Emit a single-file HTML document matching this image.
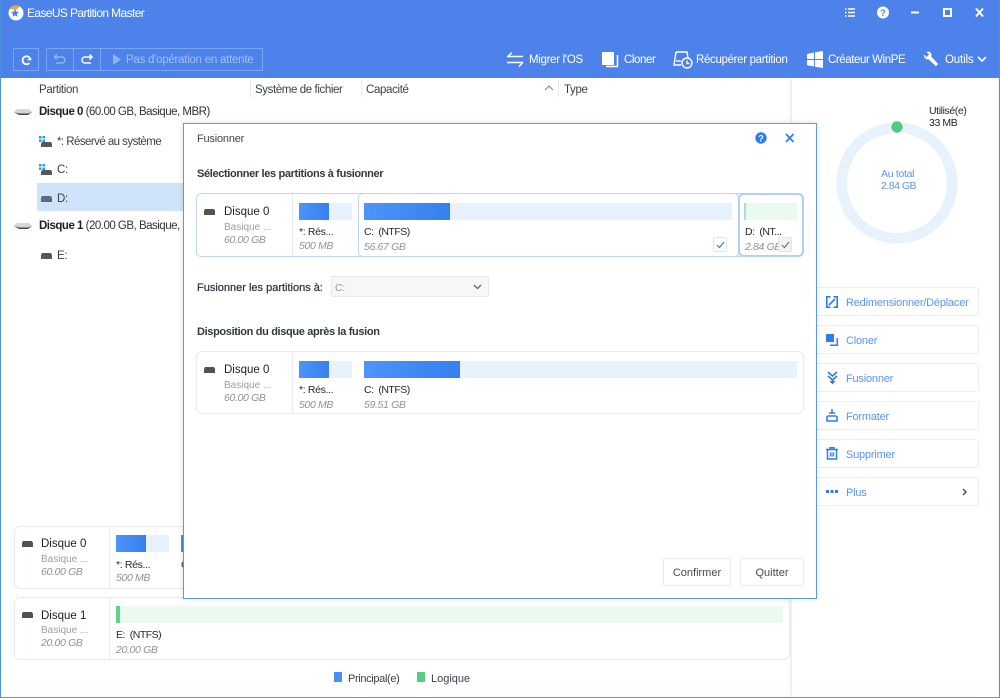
<!DOCTYPE html>
<html><head><meta charset="utf-8"><style>
*{box-sizing:border-box}
html,body{margin:0;padding:0;background:#fff}
body{width:1000px;height:698px;position:relative;overflow:hidden;font:11px "Liberation Sans",sans-serif;color:#3a3f48}
.a,.t{position:absolute}
.t{white-space:nowrap;line-height:14px;letter-spacing:-.35px;transform:translateY(1px)}
svg{position:absolute;overflow:visible}
.w{color:#fff}
.g{color:#9a9ea5;letter-spacing:0}
.i{color:#8e9299;font-style:italic}
.k{color:#23272e}
.d{color:#1c1f24;font-size:11.5px;letter-spacing:0}
.n{letter-spacing:-.5px}
.box{position:absolute;border:1px solid #e8ebf0;border-radius:6px;background:#fff}
.hbox{position:absolute;border:1px solid #bcd5f5;border-radius:5px;background:#fff}
.bb{position:absolute;background:#e7f2fd}
.bf{position:absolute;background:linear-gradient(90deg,#4f93fb,#3580ef)}
.act{position:absolute;left:817px;width:162px;height:29px;border:1px solid #e6effa;border-left:0;border-radius:0 3px 3px 0;background:#fff}
.at{color:#5a94f2;font-size:11px;letter-spacing:-.2px}
.btn{position:absolute;border:1px solid #e8ebef;border-radius:2px;background:#fff;text-align:center;line-height:28px;font-size:11px;color:#444a52}
</style></head><body>
<div class="a" style="left:0;top:0;width:1000px;height:78px;background:#4c82ea"></div>
<div class="a" style="left:0;top:0;width:1px;height:698px;background:#4a90d9"></div>
<div class="a" style="left:999px;top:0;width:1px;height:698px;background:#4a90d9"></div>
<div class="a" style="left:0;top:697px;width:1000px;height:1px;background:#5b9bd8"></div>

<!-- title -->
<svg style="left:7px;top:4px" width="18" height="18" viewBox="0 0 18 18"><circle cx="9" cy="9" r="7.500" fill="#fff"/><path d="M3 5A7.500 7.500 0 0 1 13 2.500L9 6Z" fill="#f5a623"/><path d="M8 5l1.200 2.600 2.800.3-2 2 .5 2.800L8 11.400 5.500 12.700 6 9.900 4 7.900l2.800-.3z" fill="#4c82ea"/></svg>
<div class="t w" style="left:27px;top:5px;font-size:12px;letter-spacing:-.62px">EaseUS Partition Master</div>

<!-- window controls -->
<svg style="left:844px;top:6px" width="150" height="14" fill="none" stroke="#fff">
<path d="M1 3h1.500M4 3h7M1 6.500h1.500M4 6.500h7M1 10h1.500M4 10h7" stroke-width="1.400"/>
<circle cx="39" cy="6.500" r="6" fill="#fff" stroke="none"/><text x="39" y="10" font-size="9" font-weight="bold" fill="#4c82ea" stroke="none" text-anchor="middle" font-family="Liberation Sans">?</text>
<path d="M67 6.500h8" stroke-width="2"/>
<rect x="100" y="3" width="7" height="7" stroke-width="2"/>
<path d="M132 2.500l7 8M139 2.500l-7 8" stroke-width="2"/>
</svg>

<!-- toolbar left -->
<div class="a" style="left:13px;top:48px;width:26px;height:23px;border:1px solid #7aa3f0"></div>
<svg style="left:20px;top:53px" width="14" height="14" fill="none" stroke="#fff" stroke-width="1.800"><path d="M10.500 6.500A4 4 0 1 0 9.500 10"/><path d="M7.500 6.500h4" stroke-width="1.500"/></svg>
<div class="a" style="left:46px;top:48px;width:217px;height:23px;border:1px solid #7aa3f0"></div>
<div class="a" style="left:73px;top:48px;width:1px;height:23px;background:#7aa3f0"></div>
<div class="a" style="left:100px;top:48px;width:1px;height:23px;background:#7aa3f0"></div>
<svg style="left:53px;top:53px" width="14" height="13" fill="none" stroke="#8fb2f2" stroke-width="1.500"><path d="M4 1.500L1.500 4 4 6.500M2 4h7a3 3 0 0 1 0 6H3"/></svg>
<svg style="left:80px;top:53px" width="14" height="13" fill="none" stroke="#fff" stroke-width="1.500"><path d="M9.500 1.500L12 4 9.500 6.500M12 4H5a3 3 0 0 0 0 6h6"/></svg>
<svg style="left:112px;top:53px" width="10" height="13"><path d="M1 1l8 5.500-8 5.500z" fill="#8fb2f2"/></svg>
<div class="t" style="left:126px;top:52px;color:#a3c0f5;font-size:11.500px;letter-spacing:-.25px">Pas d'opération en attente</div>

<!-- toolbar right -->
<svg style="left:507px;top:51px" width="18" height="17" fill="none" stroke="#fff" stroke-width="1.400"><path d="M0 5.500h16M5 1.500L1 5.500M16 11.500H0M12 15.500l4-4"/></svg>
<div class="t w" style="left:529px;top:52px;font-size:11.500px;letter-spacing:-.3px">Migrer l'OS</div>
<svg style="left:602px;top:51px" width="17" height="17"><path d="M0 1h12v13H0z" fill="#fff"/><path d="M4 15.500h11.500V4" fill="none" stroke="#fff" stroke-width="1.500"/></svg>
<div class="t w" style="left:624px;top:52px;font-size:11.500px;letter-spacing:-.4px">Cloner</div>
<svg style="left:673px;top:51px" width="20" height="18" fill="none" stroke="#fff" stroke-width="1.400"><path d="M3 1h11l1 6M3 1L1 14h7"/><path d="M3 10h5"/><circle cx="14" cy="12" r="5"/><path d="M14 9.500V12.500h2.500"/></svg>
<div class="t w" style="left:696px;top:52px;font-size:11.500px;letter-spacing:-.33px">Récupérer partition</div>
<svg style="left:807px;top:51px" width="17" height="17" fill="#fff"><path d="M0 3l7-1.500V8H0zM8 1.200L16 0v8H8zM0 9h7v6.500L0 14.300zM8 9h8v8l-8-1.300z"/></svg>
<div class="t w" style="left:828px;top:52px;font-size:11.500px;letter-spacing:-.42px">Créateur WinPE</div>
<svg style="left:923px;top:51px" width="17" height="17" fill="#fff"><path d="M1 3.500L3.500 6 6 3.500 3.500 1C6 0 8.500 1.500 8.500 4c0 .7-.1 1-.3 1.500l7 7.500-2.200 2.200-7.500-7C3 9.200.5 6.500 1 3.500z"/></svg>
<div class="t w" style="left:945px;top:52px;font-size:11.500px;letter-spacing:-.15px">Outils</div>
<svg style="left:977px;top:56px" width="11" height="8" fill="none" stroke="#fff" stroke-width="1.600"><path d="M1 1l4 4 4-4"/></svg>

<!-- column headers -->
<div class="t" style="left:39px;top:82px;font-size:11.500px">Partition</div>
<div class="a" style="left:250px;top:80px;width:1px;height:17px;background:#e6e8ec"></div>
<div class="t" style="left:255px;top:82px;font-size:11.500px;letter-spacing:-.4px">Système de fichier</div>
<div class="a" style="left:361px;top:80px;width:1px;height:17px;background:#e6e8ec"></div>
<div class="t" style="left:366px;top:82px;font-size:11.500px">Capacité</div>
<svg style="left:544px;top:85px" width="10" height="6" fill="none" stroke="#8a8e95" stroke-width="1.200"><path d="M1 5l4-4 4 4"/></svg>
<div class="a" style="left:558px;top:80px;width:1px;height:17px;background:#e6e8ec"></div>
<div class="t" style="left:564px;top:82px;font-size:11.500px">Type</div>
<div class="a" style="left:790px;top:79px;width:2px;height:618px;background:#eef0f3"></div>

<!-- tree -->
<div class="a" style="left:37px;top:183px;width:147px;height:28px;background:#cfe4fb"></div>
<svg style="left:14px;top:109px" width="18" height="7"><path d="M3 0h12l3 3-4 2H5L0 3z" fill="#d4d6da"/><path d="M0 3l5 3h9l4-3-4 1.500H5z" fill="#45484e"/></svg>
<div class="t" style="left:39px;top:104px;font-size:11.500px;color:#333;letter-spacing:-.5px"><b style="color:#1c1f24">Disque 0</b> (60.00 GB, Basique, MBR)</div>
<svg style="left:39px;top:136px" width="13" height="11"><path d="M0 0h2.500v2.500H0zM3.500 0H6v2.500H3.500zM0 3.500h2.500V6H0zM3.500 3.500H6V6H3.500z" fill="#2e9be8"/><path d="M3 6h9l1 2v3H2V8z" fill="#55585e"/></svg>
<div class="t" style="left:57px;top:134px;font-size:11.500px;letter-spacing:-.55px">*: Réservé au système</div>
<svg style="left:39px;top:164px" width="13" height="11"><path d="M0 0h2.500v2.500H0zM3.500 0H6v2.500H3.500zM0 3.500h2.500V6H0zM3.500 3.500H6V6H3.500z" fill="#2e9be8"/><path d="M3 6h9l1 2v3H2V8z" fill="#55585e"/></svg>
<div class="t" style="left:57px;top:162px;font-size:11.500px">C:</div>
<svg style="left:41px;top:196px" width="11" height="6"><path d="M1 0h9l1 2v4H0V2z" fill="#5a6c80"/></svg>
<div class="t" style="left:57px;top:191px;font-size:11.500px">D:</div>
<svg style="left:14px;top:223px" width="18" height="7"><path d="M3 0h12l3 3-4 2H5L0 3z" fill="#d4d6da"/><path d="M0 3l5 3h9l4-3-4 1.500H5z" fill="#45484e"/></svg>
<div class="t" style="left:39px;top:218px;font-size:11.500px;color:#333;letter-spacing:-.5px"><b style="color:#1c1f24">Disque 1</b> (20.00 GB, Basique, MBR)</div>
<svg style="left:41px;top:253px" width="11" height="6"><path d="M1 0h9l1 2v4H0V2z" fill="#55585e"/></svg>
<div class="t" style="left:57px;top:248px;font-size:11.500px">E:</div>

<!-- bottom disks -->
<div class="box" style="left:14px;top:526px;width:776px;height:63px"></div>
<div class="a" style="left:109px;top:527px;width:1px;height:61px;background:#e8ebf0"></div>
<svg style="left:22px;top:541px" width="11" height="6"><path d="M1 0h9l1 2v4H0V2z" fill="#4f5258"/></svg>
<div class="t d" style="left:41px;top:536px">Disque 0</div>
<div class="t g" style="left:41px;top:552px;font-size:10px">Basique ...</div>
<div class="t i" style="left:41px;top:564px;font-size:10.500px">60.00 GB</div>
<div class="bb" style="left:116px;top:535px;width:53px;height:17px"></div><div class="bf" style="left:116px;top:535px;width:30px;height:17px"></div>
<div class="t k" style="left:116px;top:557px;font-size:10.500px">*: Rés...</div>
<div class="t i" style="left:116px;top:570px;font-size:10.500px">500 MB</div>
<div class="bf" style="left:181px;top:535px;width:3px;height:17px"></div>
<div class="t k" style="left:181px;top:557px;font-size:10.500px">C</div>

<div class="box" style="left:14px;top:597px;width:776px;height:63px"></div>
<div class="a" style="left:109px;top:598px;width:1px;height:61px;background:#e8ebf0"></div>
<svg style="left:22px;top:612px" width="11" height="6"><path d="M1 0h9l1 2v4H0V2z" fill="#4f5258"/></svg>
<div class="t d" style="left:41px;top:608px">Disque 1</div>
<div class="t g" style="left:41px;top:623px;font-size:10px">Basique ...</div>
<div class="t i" style="left:41px;top:635px;font-size:10.500px">20.00 GB</div>
<div class="a" style="left:116px;top:606px;width:667px;height:17px;background:#eafaf0"></div><div class="a" style="left:116px;top:606px;width:4px;height:17px;background:#5fd38a"></div>
<div class="t k n" style="left:116px;top:627px;font-size:10.500px">E:&nbsp; (NTFS)</div>
<div class="t i" style="left:116px;top:642px;font-size:10.500px">20.00 GB</div>

<!-- legend -->
<div class="a" style="left:334px;top:672px;width:8px;height:10px;background:#4a8ef7"></div>
<div class="t" style="left:348px;top:671px;font-size:11px">Principal(e)</div>
<div class="a" style="left:417px;top:672px;width:8px;height:10px;background:#55cc82"></div>
<div class="t" style="left:431px;top:671px;font-size:11px;letter-spacing:0">Logique</div>

<!-- right panel -->
<svg style="left:830px;top:115px" width="135" height="135" fill="none"><circle cx="67" cy="68" r="55.300" stroke="#e7f2fd" stroke-width="10.700"/><circle cx="67" cy="12" r="6" fill="#4fcb7e" stroke="#fff" stroke-width=".6"/></svg>
<div class="t k" style="left:929px;top:103px;font-size:10.500px;letter-spacing:-.4px">Utilisé(e)</div>
<div class="t k" style="left:929px;top:115px;font-size:10.500px;letter-spacing:-.4px">33 MB</div>
<div class="t" style="left:881px;top:166px;font-size:10.500px;color:#5a94f2;letter-spacing:-.3px">Au total</div>
<div class="t" style="left:881px;top:178px;font-size:10.500px;color:#5a94f2;letter-spacing:-.5px">2.84 GB</div>

<div class="act" style="top:287px"></div>
<div class="act" style="top:325px"></div>
<div class="act" style="top:363px"></div>
<div class="act" style="top:401px"></div>
<div class="act" style="top:439px"></div>
<div class="act" style="top:477px"></div>
<svg style="left:826px;top:296px" width="12" height="12" fill="none" stroke="#2f7bf0" stroke-width="1.600"><path d="M4.500 .8H.8v10.400h3.700M7.500 11.200h3.700V.8H7.500M3 9l6-6"/></svg>
<div class="t at" style="left:846px;top:295px">Redimensionner/Déplacer</div>
<svg style="left:826px;top:334px" width="12" height="12"><path d="M0 0h8v8H0z" fill="#2f7bf0"/><path d="M4 11.300h7.300V4" fill="none" stroke="#2f7bf0" stroke-width="1.500"/></svg>
<div class="t at" style="left:846px;top:333px">Cloner</div>
<svg style="left:827px;top:372px" width="11" height="13" fill="none" stroke="#2f7bf0" stroke-width="1.600"><path d="M1 0l4.500 4L10 0M1 4l4.500 4L10 4"/><path d="M5.500 8v2"/><path d="M2.500 9h6l-3 3.500z" fill="#2f7bf0" stroke="none"/></svg>
<div class="t at" style="left:846px;top:371px">Fusionner</div>
<svg style="left:826px;top:409px" width="12" height="13" fill="none" stroke="#2f7bf0" stroke-width="1.500"><path d="M6 0v4M3 4h6M1.500 7h9M1 7v5h10V7"/></svg>
<div class="t at" style="left:846px;top:409px">Formater</div>
<svg style="left:826px;top:447px" width="12" height="13" fill="none" stroke="#2f7bf0" stroke-width="1.500"><path d="M0 2.500h12M4 2.500V.7h4v1.800M1.500 2.500V12h9V2.500M4.800 5.500v4M7.200 5.500v4"/></svg>
<div class="t at" style="left:846px;top:447px">Supprimer</div>
<svg style="left:826px;top:490px" width="12" height="4" fill="#2f7bf0"><path d="M0 0h3v3H0zM4.500 0h3v3h-3zM9 0h3v3H9z"/></svg>
<div class="t at" style="left:846px;top:485px">Plus</div>
<svg style="left:962px;top:488px" width="6" height="8" fill="none" stroke="#555" stroke-width="1.500"><path d="M1 1l3 3-3 3"/></svg>

<!-- dialog -->
<div class="a" style="left:183px;top:123px;width:634px;height:476px;background:#fff;border:1px solid #5b9bd8;box-shadow:0 0 6px rgba(0,0,0,.12)"></div>
<div class="t" style="left:197px;top:131px;font-size:11px;color:#444;letter-spacing:-.2px">Fusionner</div>
<svg style="left:755px;top:132px" width="12" height="12"><circle cx="6" cy="6" r="5.700" fill="#2a7fee"/><text x="6" y="9.500" font-size="9" font-weight="bold" fill="#fff" text-anchor="middle" font-family="Liberation Sans">?</text></svg>
<svg style="left:785px;top:133px" width="10" height="10" fill="none" stroke="#2a7fee" stroke-width="1.700"><path d="M1 1l7.500 8M8.500 1L1 9"/></svg>
<div class="t" style="left:197px;top:166px;font-size:11px;font-weight:bold;color:#33373e">Sélectionner les partitions à fusionner</div>

<!-- merge row -->
<div class="hbox" style="left:196px;top:193px;width:608px;height:64px"></div>
<div class="a" style="left:292px;top:194px;width:1px;height:62px;background:#dfe8f3"></div>
<svg style="left:204px;top:209px" width="11" height="6"><path d="M1 0h9l1 2v4H0V2z" fill="#4f5258"/></svg>
<div class="t d" style="left:224px;top:204px">Disque 0</div>
<div class="t g" style="left:224px;top:220px;font-size:10px">Basique ...</div>
<div class="t i" style="left:224px;top:232px;font-size:10.500px">60.00 GB</div>
<div class="bb" style="left:299px;top:203px;width:53px;height:17px"></div><div class="bf" style="left:299px;top:203px;width:30px;height:17px"></div>
<div class="t k" style="left:299px;top:224px;font-size:10.500px">*: Rés...</div>
<div class="t i" style="left:299px;top:238px;font-size:10.500px">500 MB</div>

<div class="hbox" style="left:358px;top:193px;width:381px;height:64px"></div>
<div class="bb" style="left:364px;top:203px;width:368px;height:17px"></div><div class="bf" style="left:364px;top:203px;width:86px;height:17px"></div>
<div class="t k n" style="left:364px;top:224px;font-size:10.500px">C:&nbsp; (NTFS)</div>
<div class="t i" style="left:364px;top:239px;font-size:10.500px">56.67 GB</div>
<div class="a" style="left:713px;top:237px;width:14px;height:15px;border:1px solid #dde3ea;border-radius:2px;background:#fff"></div>
<svg style="left:716px;top:241px" width="9" height="8" fill="none" stroke="#2a7fee" stroke-width="1.200"><path d="M1 4l2.500 2.500L8 1"/></svg>

<div class="a" style="left:738px;top:193px;width:66px;height:64px;border:2px solid #b3cff3;border-radius:6px;background:#fff"></div>
<div class="a" style="left:744px;top:203px;width:53px;height:17px;background:#eafaf0"></div><div class="a" style="left:744px;top:203px;width:2px;height:17px;background:#a3e5bc"></div>
<div class="t k n" style="left:745px;top:224px;font-size:10.500px">D:&nbsp; (NT...</div>
<div class="t i" style="left:745px;top:239px;width:34px;overflow:hidden;font-size:10.500px">2.84 GB</div>
<div class="a" style="left:778px;top:237px;width:14px;height:15px;border:1px solid #e2e4e8;border-radius:2px;background:#f2f3f5"></div>
<svg style="left:781px;top:241px" width="9" height="8" fill="none" stroke="#777" stroke-width="1.200"><path d="M1 4l2.500 2.500L8 1"/></svg>

<!-- select -->
<div class="t" style="left:197px;top:280px;font-size:11px;color:#33373e;letter-spacing:0;-webkit-text-stroke:.25px #33373e">Fusionner les partitions à:</div>
<div class="a" style="left:331px;top:276px;width:158px;height:21px;background:#f6f7f8;border:1px solid #e5e8ec;border-radius:2px"></div>
<div class="t" style="left:335px;top:280px;color:#999;font-size:10.500px">C:</div>
<svg style="left:473px;top:284px" width="9" height="6" fill="none" stroke="#666" stroke-width="1.300"><path d="M1 1l3.500 3.500L8 1"/></svg>

<div class="t" style="left:197px;top:324px;font-size:11px;font-weight:bold;color:#33373e">Disposition du disque après la fusion</div>

<!-- after row -->
<div class="box" style="left:196px;top:351px;width:608px;height:63px"></div>
<div class="a" style="left:292px;top:352px;width:1px;height:61px;background:#e8ebf0"></div>
<svg style="left:204px;top:367px" width="11" height="6"><path d="M1 0h9l1 2v4H0V2z" fill="#4f5258"/></svg>
<div class="t d" style="left:224px;top:362px">Disque 0</div>
<div class="t g" style="left:224px;top:378px;font-size:10px">Basique ...</div>
<div class="t i" style="left:224px;top:390px;font-size:10.500px">60.00 GB</div>
<div class="bb" style="left:299px;top:361px;width:53px;height:17px"></div><div class="bf" style="left:299px;top:361px;width:30px;height:17px"></div>
<div class="t k" style="left:299px;top:382px;font-size:10.500px">*: Rés...</div>
<div class="t i" style="left:299px;top:397px;font-size:10.500px">500 MB</div>
<div class="bb" style="left:364px;top:361px;width:433px;height:17px"></div><div class="bf" style="left:364px;top:361px;width:96px;height:17px"></div>
<div class="t k n" style="left:364px;top:382px;font-size:10.500px">C:&nbsp; (NTFS)</div>
<div class="t i" style="left:364px;top:397px;font-size:10.500px">59.51 GB</div>

<div class="btn" style="left:663px;top:558px;width:68px;height:28px">Confirmer</div>
<div class="btn" style="left:740px;top:558px;width:64px;height:28px">Quitter</div>
</body></html>
